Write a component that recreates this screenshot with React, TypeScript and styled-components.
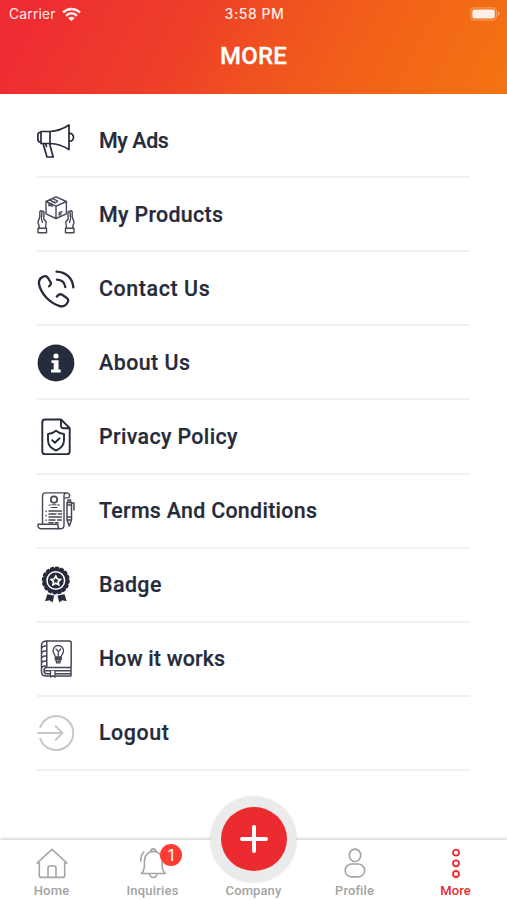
import React from "react";
import styled, { createGlobalStyle } from "styled-components";

const GlobalStyle = createGlobalStyle`
  * { box-sizing: border-box; }
  body { margin: 0; background: #fff; font-family: Roboto, "Liberation Sans", sans-serif; }
`;

const Screen = styled.div`
  width: 507px;
  height: 900px;
  display: flex;
  flex-direction: column;
  overflow: hidden;
  background: #fff;
`;

const Header = styled.header`
  height: 94px;
  flex: none;
  color: #fff;
  background: linear-gradient(118deg, #ee2d32 8%, #ee4128 38%, #f05120 52%, #f26119 71%, #f47411 100%);
`;

const StatusBar = styled.div`
  height: 28px;
  padding: 0 7px 0 9px;
  display: grid;
  grid-template-columns: 1fr auto 1fr;
  align-items: center;
  font-family: Inter, sans-serif;
  font-size: 13.8px;
  opacity: 0.9;
`;

const Carrier = styled.div`
  display: flex;
  align-items: center;
  gap: 6px;
  letter-spacing: 0.22px;
`;

const Clock = styled.div`
  font-weight: 500;
  font-size: 14px;
  line-height: 16px;
  padding-bottom: 1px;
  letter-spacing: 0.55px;
`;

const BatterySlot = styled.div`
  display: flex;
  justify-content: flex-end;
`;

const Title = styled.h1`
  margin: 14px 0 0;
  text-align: center;
  font-size: 24px;
  line-height: 28px;
  font-weight: 500;
  letter-spacing: 0.15px;
  -webkit-text-stroke: 0.3px #fff;
`;

const Menu = styled.ul`
  list-style: none;
  margin: 0;
  padding: 10px 37px 0;
  flex: 1;
`;

const Row = styled.li`
  height: 74.12px;
  padding-top: 1px;
  display: flex;
  align-items: center;
  gap: 24px;
  border-bottom: 2px solid #f1f1f2;
  color: #262b3b;
`;

const RowLabel = styled.span<{ $spacing: number }>`
  font-size: 21.4px;
  line-height: 28px;
  font-weight: 500;
  white-space: nowrap;
  letter-spacing: ${(p) => p.$spacing}px;
  -webkit-text-stroke: 0.2px #262b3b;
`;

const RowIcon = styled.svg.attrs({ viewBox: "0 0 38 38", width: 38, height: 38 })<{ $fine?: boolean }>`
  flex: none;
  fill: none;
  stroke: currentColor;
  stroke-width: 1.7;
  stroke-linecap: round;
  stroke-linejoin: round;
  opacity: ${(p) => (p.$fine ? 0.86 : 1)};
`;

const TabBar = styled.nav`
  position: relative;
  flex: none;
  height: 60px;
  padding: 0 1px;
  display: grid;
  grid-template-columns: repeat(5, 1fr);
  background: #fff;
  box-shadow: 0 -1px 3px rgba(0, 0, 0, 0.22);
`;

const Tab = styled.div<{ $active?: boolean }>`
  position: relative;
  z-index: 2;
  display: flex;
  flex-direction: column;
  align-items: center;
  justify-content: space-between;
  padding: 7px 0 1px;
  color: ${(p) => (p.$active ? "#ec2b32" : "#a4a4a4")};
`;

const TabIcon = styled.svg.attrs({ viewBox: "0 0 34 32", width: 34, height: 32 })`
  fill: none;
  stroke: currentColor;
  stroke-width: 1.6;
  stroke-linecap: round;
  stroke-linejoin: round;
`;

const TabLabel = styled.span<{ $spacing: number }>`
  margin-top: auto;
  font-size: 13px;
  line-height: 16px;
  font-weight: 500;
  letter-spacing: ${(p) => p.$spacing}px;
`;

const Count = styled.span`
  position: absolute;
  top: 4px;
  left: 58px;
  width: 22px;
  height: 22px;
  border-radius: 50%;
  background: #ff3b34;
  color: #fff;
  font: 400 16px/22px Inter, sans-serif;
  text-align: center;
`;

const AddRing = styled.div`
  position: absolute;
  z-index: 1;
  left: 211px;
  top: -43.5px;
  width: 85px;
  height: 85px;
  border-radius: 50%;
  display: grid;
  place-items: center;
  background: #ebebeb;
  box-shadow: 0 0 3px rgba(0, 0, 0, 0.2);
`;

const AddButton = styled.button`
  width: 66px;
  height: 64px;
  padding: 0;
  border: 0;
  border-radius: 50%;
  display: grid;
  place-items: center;
  background: #ec2b30;
`;

const Megaphone = () => (
  <RowIcon>
    <path d="M4 9.5h9v12H4zM4 10.5H2L.9 12v6L2 20h2M13 9.5C20 9.2 26 7 32 3v24.5c-6-4-12-5.7-19-6M32 11.2c6 .3 6 8 0 8.3M6 21.5l4 13.5h6.2l-3.7-13.5M8.5 21.5l1 3" />
  </RowIcon>
);

const Products = () => (
  <RowIcon $fine>
    <path
      strokeWidth="1.4"
      d="M19 .8l10.4 4.7v12.3L19 22.5 9 17.8V5.5zM9 5.5l10 4.7 10.4-4.7M19 10.2v12.3M12.5 4l5 2.3M15.5 2.6l5 2.3M12 7v2.8l2-1 1 1.6V8.4M15 5.5l3 1.4 2-1M22 17l3-1.3M22 19l2-1"
    />
    <path
      strokeWidth="1.4"
      d="M1 32.2h8.5v4.6H1zM2.5 32L1 26l1.8-5V16c.2-1.6 2-1.6 2.2 0l-.5 5.5M5 16.5c.2-1.8 1.9-1.8 2 0L6.8 23l2.4 3-.7 6M4.5 23l1 3.4"
    />
    <path
      strokeWidth="1.4"
      d="M37 32.2h-8.5v4.6H37zM35.5 32l1.5-6-1.8-5V16c-.2-1.6-2-1.6-2.2 0l.5 5.5M33 16.5c-.2-1.8-1.9-1.8-2 0l.2 6.5-2.4 3 .7 6M33.5 23l-1 3.4"
    />
  </RowIcon>
);

const Phone = () => (
  <RowIcon>
    <path
      strokeWidth="2.3"
      d="M12.2 16.2c1.6-1.2 2.1-2.3 1.5-3.7L11 8c-1.2-1.8-3-2.2-4.7-1.4C3 8 1.5 11 2.1 14.3c1.6 9 10.2 18.2 20 21.6 3.5 1.1 6.6-.1 8.5-3.4 1.1-2 .7-3.6-1.1-4.8l-4.4-2.9c-1.9-1.1-3.8-.3-5.2 1.7M19.5 1.6C29 1.9 35.6 8 36.3 17.4M20 9.7c4.8.2 7.7 3 8.3 7.5"
    />
  </RowIcon>
);

const Info = () => (
  <RowIcon>
    <circle cx="19" cy="19" r="18.4" fill="#252d3c" stroke="none" />
    <circle cx="19" cy="12" r="2.6" fill="#fff" stroke="none" />
    <path fill="#fff" stroke="none" d="M14.5 16.2h7v9.4h2.2v2.9h-9.6v-2.9h2.6v-6.5h-2.2z" />
  </RowIcon>
);

const Privacy = () => (
  <RowIcon>
    <path strokeWidth="1.9" d="M24 1.5H8A2.7 2.7 0 0 0 5.3 4.2v29.2A2.7 2.7 0 0 0 8 36.1h22a2.7 2.7 0 0 0 2.7-2.7V10.2zM24 1.5V8a2.2 2.2 0 0 0 2.2 2.2h6.5" />
    <path strokeWidth="1.9" d="M19 12.8c2.5 2.2 5 3 8 3.2v6c0 5-3.2 8.5-8 10.5-4.8-2-8-5.5-8-10.5v-6c3-.2 5.5-1 8-3.2z" />
    <path strokeWidth="1.9" d="M15.2 22.2l2.7 2.5 4.7-4.4" />
  </RowIcon>
);

const Terms = () => (
  <RowIcon $fine>
    <path strokeWidth="1.4" d="M5.5 32V4c0-2 1-3.1 3-3.1h21c4.2.3 4 5 1 5h-3.5M27 6V4c0-2 .8-3 2.5-3.1M27 6v27M1 32.2h20v2c0 1.5.8 2.6 2.5 2.6H4C1.8 36.8.8 35.4 1 32.2zM23.5 36.8c2.5 0 3.5-1.3 3.5-3.8" />
    <circle cx="17" cy="7.6" r="3.2" strokeWidth="1.7" />
    <path strokeWidth="1.1" d="M12 13h1.5M15 12.8h4M20.5 13h2M14 15.5h6" />
    <path strokeWidth="1.5" strokeDasharray=".2 4.2" d="M9.2 19.2v11" />
    <path strokeWidth="1.4" d="M12 19h12.5M12 22h7m2.5 0h3M12 25h12.5M12 28h6m2.5 0h4M12 30.7h4m2.5 0h2.5" />
    <path strokeWidth="1.5" d="M30 13h4.5v15l-2.2 6-2.3-6zM30 13v-2.5h4.5V13M31 10V8h2.5v2M34.5 11H37v7M30 25h4.5M30 28h4.5" />
  </RowIcon>
);

const BadgeIcon = () => (
  <RowIcon>
    <circle cx="18.8" cy="14.5" r="12.8" fill="currentColor" stroke="none" />
    <circle cx="18.8" cy="14.5" r="12.9" strokeWidth="2.2" strokeDasharray="2.2 2.855" />
    <circle cx="18.8" cy="14.5" r="8.8" stroke="#fff" strokeWidth="1.5" />
    <path fill="#fff" stroke="none" d="M18.8 8.3l2 4 4.4.6-3.2 3 .8 4.4-4-2.1-4 2.1.8-4.4-3.2-3 4.4-.6z" />
    <path fill="currentColor" stroke="none" d="M18.8 11.7l.9 1.8 2 .3-1.5 1.4.4 2-1.8-1-1.8 1 .4-2-1.5-1.4 2-.3z" />
    <path fill="currentColor" stroke="none" d="M10.3 28.3c2 .1 3.4 1 7 1.3l-1.8 7-3-2.4-4.4 1zM27.5 28.3c-2 .1-3.4 1-7 1.3l1.8 7 3-2.4 4.4 1z" />
  </RowIcon>
);

const Book = () => (
  <RowIcon $fine>
    <path strokeWidth="1.5" d="M10 1h22.2c1.3 0 2 .7 2 2v22.5c0 1.2-.8 2-2 2H9.8V1C6.5 1 4.5 2.6 4.5 5.4v26C4.5 34.8 6 36 9 36h25v-2.2H10c-4 0-4-6.3 0-6.3M8.5 30.8h25.4M34 27v7M4.6 8c1-2.4 3-2.3 5.2-2.3M4.6 13c1-2.4 3-2.3 5.2-2.3M4.6 18c1-2.4 3-2.3 5.2-2.3M4.6 23c1-2.4 3-2.3 5.2-2.3M4.6 28c1-2.4 3-2.3 5.2-2.3" />
    <path strokeWidth="1.3" fill="#fff" d="M13.5 30.8v6.3l2.2-1.5 2.3 1.5v-6.3" />
    <path strokeWidth="1.3" d="M18.3 17c0-2.5-2.2-3.2-2.2-6.3a5.2 5.2 0 0 1 10.4 0c0 3.1-2.2 3.8-2.2 6.3zM18.3 17v2.7h6V17M19 20l.6 2.8h3.2l.6-2.8M21.3 17v-5.5M19 9l2.3 2.7L23.6 9M18.5 18.4h5.6M20.3 21.3h2" />
  </RowIcon>
);

const Logout = () => (
  <RowIcon>
    <path stroke="#c6c9cc" strokeWidth="2" d="M3.3 13.2a17 17 0 1 1 0 11.6M1.2 19h24M18.7 12.3l6.8 6.7-6.8 6.7" />
  </RowIcon>
);

const items = [
  { label: "My Ads", icon: Megaphone, spacing: -0.38 },
  { label: "My Products", icon: Products, spacing: 0.31 },
  { label: "Contact Us", icon: Phone, spacing: 0.6 },
  { label: "About Us", icon: Info, spacing: 0.47 },
  { label: "Privacy Policy", icon: Privacy, spacing: 0.36 },
  { label: "Terms And Conditions", icon: Terms, spacing: 0.29 },
  { label: "Badge", icon: BadgeIcon, spacing: 0.42 },
  { label: "How it works", icon: Book, spacing: 0.18 },
  { label: "Logout", icon: Logout, spacing: 0.56 },
];

export default function App() {
  return (
    <Screen>
      <GlobalStyle />
      <Header>
        <StatusBar>
          <Carrier>
            <span>Carrier</span>
            <svg width="19" height="15" viewBox="0 0 19 15" fill="none" stroke="#fff" strokeWidth="2.5">
              <path d="M1 5.4c5-4.7 12-4.7 17 0M4 8.7c3.4-3 7.6-3 11 0" />
              <path fill="#fff" stroke="none" d="M6.2 10.9c2-1.7 4.6-1.7 6.6 0L9.5 14.2z" />
            </svg>
          </Carrier>
          <Clock>3:58 PM</Clock>
          <BatterySlot>
            <svg width="30" height="15" viewBox="0 0 30 15">
              <rect x=".8" y=".8" width="25.6" height="12.4" rx="3.6" fill="none" stroke="#fff" strokeOpacity=".35" strokeWidth="1.2" />
              <rect x="2.4" y="2.4" width="22.4" height="9.2" rx="2" fill="#fff" />
              <path d="M27.8 4.8c2 .7 2 3.7 0 4.4z" fill="#fff" opacity=".5" />
            </svg>
          </BatterySlot>
        </StatusBar>
        <Title>MORE</Title>
      </Header>
      <Menu>
        {items.map(({ label, icon: Icon, spacing }) => (
          <Row key={label}>
            <Icon />
            <RowLabel $spacing={spacing}>{label}</RowLabel>
          </Row>
        ))}
      </Menu>
      <TabBar>
        <Tab>
          <TabIcon>
            <path d="M4.3 16H2.1L17 2.3 31.9 16h-2.2v12.6c0 1-.8 1.8-1.8 1.8H6.1c-1 0-1.8-.8-1.8-1.8zM13 30v-9c0-1.3.7-2 2-2h4c1.3 0 2 .7 2 2v9" />
          </TabIcon>
          <TabLabel $spacing={0.2}>Home</TabLabel>
        </Tab>
        <Tab>
          <TabIcon>
            <path d="M5.3 26.5c3.3-3.1 3.2-6 3.2-12.4 0-6 3.6-9.7 8.8-9.7s8.8 3.7 8.8 9.7c0 6.4-.1 9.3 3.2 12.4zM14.6 4.9c-.4-4 5.8-4 5.4 0M13.7 26.7c.4 5 6.8 5 7.2 0M4.7 14c0-4 1-7 3.2-9.2" />
          </TabIcon>
          <Count>1</Count>
          <TabLabel $spacing={0.2}>Inquiries</TabLabel>
        </Tab>
        <Tab>
          <TabLabel $spacing={0.1}>Company</TabLabel>
        </Tab>
        <Tab>
          <TabIcon>
            <ellipse cx="17" cy="8.3" rx="5.7" ry="6.2" />
            <rect x="7.2" y="17" width="19.4" height="12.9" rx="6.3" />
          </TabIcon>
          <TabLabel $spacing={0.1}>Profile</TabLabel>
        </Tab>
        <Tab $active>
          <TabIcon>
            <circle cx="17" cy="5.6" r="3" strokeWidth="1.8" />
            <circle cx="17" cy="16.3" r="3" strokeWidth="1.8" />
            <circle cx="17" cy="27" r="3" strokeWidth="1.8" />
          </TabIcon>
          <TabLabel $spacing={0.1}>More</TabLabel>
        </Tab>
        <AddRing>
          <AddButton aria-label="Add company">
            <svg width="30" height="30" viewBox="0 0 30 30" stroke="#fff" strokeWidth="4" strokeLinecap="round">
              <path d="M15 3v24M3 15h24" />
            </svg>
          </AddButton>
        </AddRing>
      </TabBar>
    </Screen>
  );
}
